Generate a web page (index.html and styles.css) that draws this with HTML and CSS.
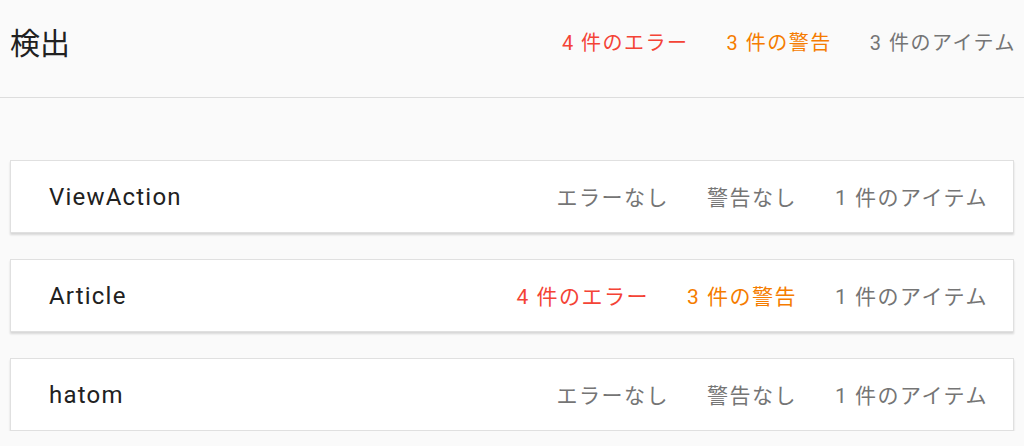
FILE: index.html
```html
<!DOCTYPE html>
<html lang="ja">
<head>
    <meta charset="UTF-8">
    <meta name="viewport" content="width=device-width, initial-scale=1.0">
    <title>検出</title>
    <link rel="stylesheet" href="styles.css">
</head>
<body>
    <header class="summary">
        <h1>検出</h1>
        <div class="counts">
            <span class="error">4 件のエラー</span>
            <span class="warning">3 件の警告</span>
            <span>3 件のアイテム</span>
        </div>
    </header>

    <main class="list">
        <div class="card">
            <div class="name">ViewAction</div>
            <div class="counts">
                <span>エラーなし</span>
                <span>警告なし</span>
                <span>1 件のアイテム</span>
            </div>
        </div>
        <div class="card">
            <div class="name">Article</div>
            <div class="counts">
                <span class="error">4 件のエラー</span>
                <span class="warning">3 件の警告</span>
                <span>1 件のアイテム</span>
            </div>
        </div>
        <div class="card">
            <div class="name">hatom</div>
            <div class="counts">
                <span>エラーなし</span>
                <span>警告なし</span>
                <span>1 件のアイテム</span>
            </div>
        </div>
    </main>
</body>
</html>
```

FILE: styles.css
```css
* {
    box-sizing: border-box;
    margin: 0;
    padding: 0;
}

body {
    font-family: Roboto, "Noto Sans CJK JP", sans-serif;
    background-color: #fafafa;
    color: #212121;
}

.summary {
    display: flex;
    align-items: center;
    justify-content: space-between;
    height: 98px;
    padding: 0 8px 0 10px;
    border-bottom: 1px solid #dddddd;
}

.summary h1 {
    font-size: 30px;
    font-weight: 400;
    padding-bottom: 16px;
}

.counts {
    display: flex;
    gap: 38px;
    font-size: 21px;
    letter-spacing: 1.5px;
    color: #757575;
}

.summary .counts {
    padding-bottom: 14px;
    font-size: 20px;
}

.error {
    color: #f44336;
}

.warning {
    color: #f57c00;
}

.list {
    display: flex;
    flex-direction: column;
    gap: 26px;
    padding: 62px 10px 0;
}

.card {
    display: flex;
    align-items: center;
    justify-content: space-between;
    height: 73px;
    padding: 0 25px 0 38px;
    background-color: white;
    border: 1px solid #e0e0e0;
    box-shadow: 0 2px 2px rgba(0, 0, 0, 0.14);
}

.name {
    font-size: 24px;
    letter-spacing: 1.2px;
}

.card .counts {
    padding-bottom: 2px;
}
```
